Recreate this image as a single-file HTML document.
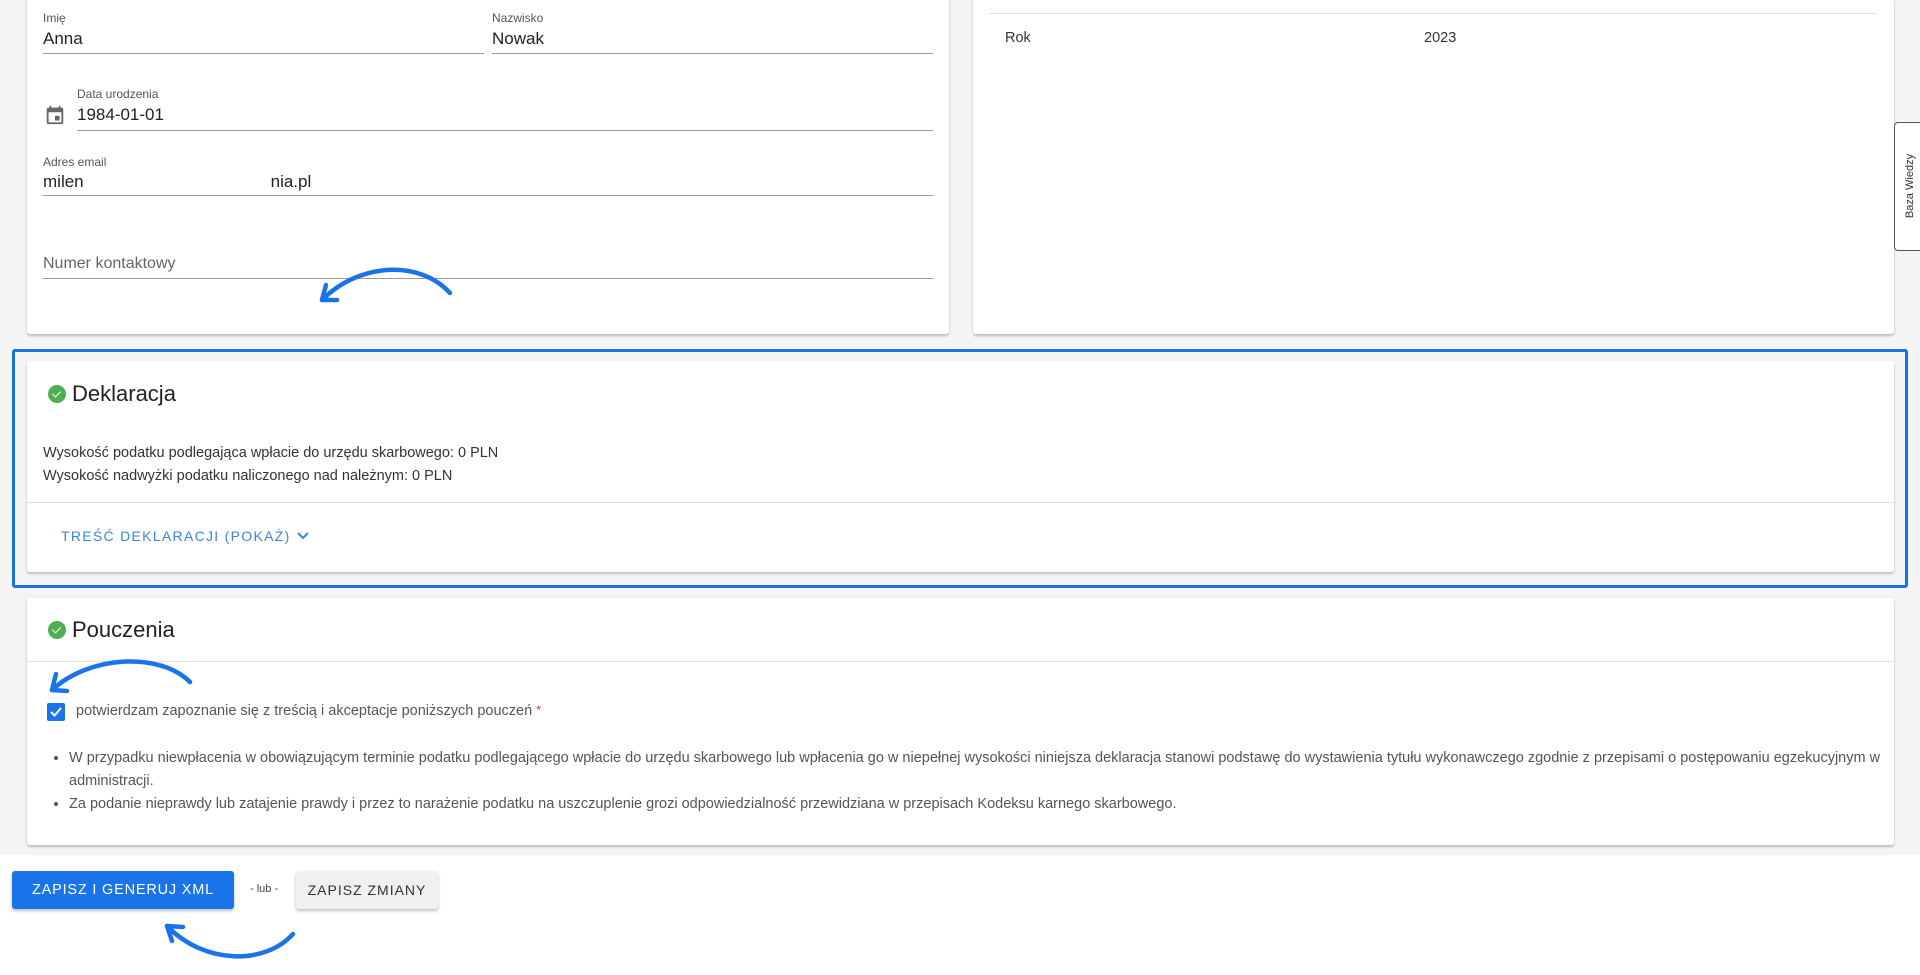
<!DOCTYPE html>
<html><head><meta charset="utf-8"><style>
*{box-sizing:border-box;margin:0;padding:0}
body{width:1920px;height:975px;background:#f5f5f5;font-family:"Liberation Sans",Arial,sans-serif;position:relative;overflow:hidden;color:#222}
.a{position:absolute}
.card{position:absolute;background:#fff;box-shadow:0 2px 2px rgba(0,0,0,.18),0 1px 4px rgba(0,0,0,.08);border-radius:3px}
.lbl{position:absolute;font-size:12px;color:#555}
.val{position:absolute;font-size:17px;color:#222}
.ul{position:absolute;height:1px;background:#9a9a9a}
.ttl{position:absolute;font-size:22px;color:#222;display:flex;align-items:center}
.ck{width:18px;height:18px;border-radius:50%;background:#4caf50;display:inline-block;margin-right:6px;position:relative}
.ck:after{content:"";position:absolute;left:6px;top:4px;width:4px;height:7px;border:solid #fff;border-width:0 1.5px 1.5px 0;transform:rotate(45deg)}
.t14{font-size:14.5px;color:#333}
</style></head><body>
<div class="card" style="left:27px;top:-4px;width:922px;height:338px"></div>
<div class="lbl" style="left:43px;top:11px">Imię</div>
<div class="val" style="left:43px;top:29px">Anna</div>
<div class="ul" style="left:43px;top:53px;width:441px"></div>
<div class="lbl" style="left:492px;top:11px">Nazwisko</div>
<div class="val" style="left:492px;top:29px">Nowak</div>
<div class="ul" style="left:492px;top:53px;width:441px"></div>
<svg class="a" style="left:44px;top:103px" width="22" height="24" viewBox="0 0 24 24"><path fill="#666" d="M19 4h-1V2h-2v2H8V2H6v2H5c-1.1 0-2 .9-2 2v14c0 1.1.9 2 2 2h14c1.1 0 2-.9 2-2V6c0-1.1-.9-2-2-2zm0 16H5V9h14v11zM12 13h5v5h-5z"/></svg>
<div class="lbl" style="left:77px;top:87px">Data urodzenia</div>
<div class="val" style="left:77px;top:105px">1984-01-01</div>
<div class="ul" style="left:77px;top:130px;width:856px"></div>
<div class="lbl" style="left:43px;top:155px">Adres email</div>
<div class="val" style="left:43px;top:172px">milen<span style="color:#fff">xxxxxxxxxxxxxxxxxxxxxx</span>nia.pl</div>
<div class="ul" style="left:43px;top:195px;width:890px"></div>
<div class="val" style="left:43px;top:255px;color:#666;font-size:16px">Numer kontaktowy</div>
<div class="ul" style="left:43px;top:278px;width:890px"></div>
<div class="card" style="left:973px;top:-4px;width:921px;height:338px"></div>
<div class="ul" style="left:989px;top:13px;width:888px;background:#e0e0e0"></div>
<div class="a t14" style="left:1005px;top:30px">Rok</div>
<div class="a t14" style="left:1424px;top:30px">2023</div>
<div class="a" style="left:1894px;top:122px;width:30px;height:129px;background:#fff;border:1px solid #555;border-right:none;border-radius:4px 0 0 4px"></div>
<div class="a" style="left:1860px;top:180px;width:100px;font-size:11px;color:#333;transform:rotate(-90deg);text-align:center">Baza Wiedzy</div>
<div class="a" style="left:12px;top:349px;width:1896px;height:239px;border:3px solid #1a73e8;border-radius:3px"></div>
<div class="card" style="left:27px;top:361px;width:1867px;height:211px"></div>
<div class="ttl" style="left:48px;top:381px"><span class="ck"></span>Deklaracja</div>
<div class="a t14" style="left:43px;top:445px">Wysokość podatku podlegająca wpłacie do urzędu skarbowego: 0 PLN</div>
<div class="a t14" style="left:43px;top:468px">Wysokość nadwyżki podatku naliczonego nad należnym: 0 PLN</div>
<div class="ul" style="left:27px;top:502px;width:1867px;background:#e0e0e0"></div>
<div class="a" style="left:61px;top:528px;font-size:14px;color:#3b86d8;letter-spacing:1.3px">TREŚĆ DEKLARACJI (POKAŻ) <svg width="14" height="10" viewBox="0 0 14 10"><path d="M2 2l5 5 5-5" stroke="#3b86d8" stroke-width="2" fill="none"/></svg></div>
<div class="card" style="left:27px;top:598px;width:1867px;height:247px"></div>
<div class="ttl" style="left:48px;top:617px"><span class="ck"></span>Pouczenia</div>
<div class="ul" style="left:27px;top:661px;width:1867px;background:#e0e0e0"></div>
<div class="a" style="left:47px;top:703px;width:18px;height:18px;background:#1a73e8;border-radius:2px"></div>
<svg class="a" style="left:47px;top:703px" width="18" height="18"><path d="M4 9l3.5 3.5L14 5" stroke="#fff" stroke-width="2" fill="none"/></svg>
<div class="a t14" style="left:76px;top:703px;color:#555">potwierdzam zapoznanie się z treścią i akceptacje poniższych pouczeń <span style="color:#e53935;vertical-align:top;font-size:12px">*</span></div>
<ul class="a" style="left:69px;top:747px;width:1830px;font-size:14.5px;color:#555;line-height:23px;padding-left:0">
<li>W przypadku niewpłacenia w obowiązującym terminie podatku podlegającego wpłacie do urzędu skarbowego lub wpłacenia go w niepełnej wysokości niniejsza deklaracja stanowi podstawę do wystawienia tytułu wykonawczego zgodnie z przepisami o postępowaniu egzekucyjnym w administracji.</li>
<li>Za podanie nieprawdy lub zatajenie prawdy i przez to narażenie podatku na uszczuplenie grozi odpowiedzialność przewidziana w przepisach Kodeksu karnego skarbowego.</li>
</ul>
<div class="a" style="left:0;top:855px;width:1920px;height:120px;background:#fff"></div>
<div class="a" style="left:12px;top:871px;width:222px;height:38px;background:#1a73e8;border-radius:3px;box-shadow:0 2px 3px rgba(0,0,0,.25);color:#fff;font-size:14.5px;letter-spacing:0.8px;text-align:center;line-height:38px">ZAPISZ I GENERUJ XML</div>
<div class="a" style="left:250px;top:883px;font-size:11px;color:#444">- lub -</div>
<div class="a" style="left:296px;top:871px;width:142px;height:38px;background:#f0f0f0;border-radius:3px;box-shadow:0 2px 3px rgba(0,0,0,.25);color:#333;font-size:14px;letter-spacing:1px;text-align:center;line-height:38px">ZAPISZ ZMIANY</div>
<svg class="a" style="left:0;top:0" width="1920" height="975">
<g stroke="#1a73e8" stroke-width="4.5" fill="none" stroke-linecap="round">
<path d="M450 293 C420 260 360 262 322 300"/><path d="M322 300 L326 285 M322 300 L337 300"/>
<path d="M190 682 C160 652 90 655 52 690"/><path d="M52 690 L56 674 M52 690 L67 691"/>
<path d="M293 934 C265 965 205 965 167 926"/><path d="M167 926 L183 927 M167 926 L172 941"/>
</g></svg>
</body></html>
